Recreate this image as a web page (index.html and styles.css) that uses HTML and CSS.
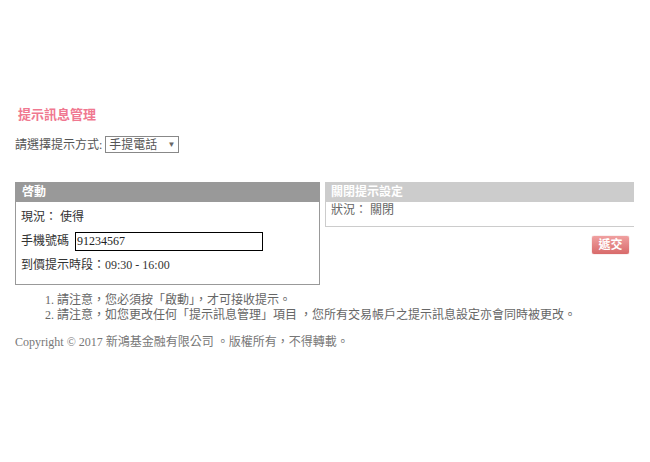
FILE: index.html
```html
<!DOCTYPE html>
<html lang="zh-Hant">
<head>
<meta charset="utf-8">
<link rel="stylesheet" href="styles.css">
</head>
<body>
<div class="page">
  <h1 class="title">提示訊息管理</h1>
  <div class="method">
    <span>請選擇提示方式:</span>
    <span class="select"><span class="select-text">手提電話</span><span class="arrow">▼</span></span>
  </div>
  <div class="panels">
    <div class="panel panel-left">
      <div class="panel-head dark">啓動</div>
      <div class="panel-body">
        <div class="row">現況： 使得</div>
        <div class="row row-input"><span>手機號碼</span><span class="input">91234567</span></div>
        <div class="row">到價提示時段：09:30 - 16:00</div>
      </div>
    </div>
    <div class="right-col">
      <div class="panel panel-right">
        <div class="panel-head light">關閉提示設定</div>
        <div class="panel-body-right">狀況： 關閉</div>
      </div>
      <div class="actions"><span class="btn">遞交</span></div>
    </div>
  </div>
  <ol class="notes">
    <li>請注意，您必須按「啟動」，才可接收提示。</li>
    <li>請注意，如您更改任何「提示訊息管理」項目 ，您所有交易帳戶之提示訊息設定亦會同時被更改。</li>
  </ol>
  <p class="copy">Copyright © 2017 新鴻基金融有限公司 。版權所有，不得轉載。</p>
</div>
</body>
</html>
```

FILE: styles.css
```css
html, body {
  margin: 0;
  padding: 0;
  background: #fff;
}
body {
  font-family: "Liberation Serif", "Noto Sans CJK TC", serif;
  font-size: 12px;
  color: #555;
}
.page {
  padding: 106px 0 0 15px;
  width: 619px;
}
.title {
  margin: 0 0 0 3px;
  font-size: 13px;
  line-height: 18px;
  font-weight: bold;
  color: #f07890;
}
.method {
  margin-top: 11px;
  display: flex;
  align-items: center;
  height: 18px;
  gap: 3px;
}
.select {
  display: inline-flex;
  align-items: center;
  justify-content: space-between;
  width: 66px;
  height: 15px;
  border: 1px solid #888;
  padding: 0 3px 0 3px;
  color: #555;
}
.arrow {
  font-size: 8px;
  color: #666;
}
.panels {
  margin-top: 29px;
  display: flex;
  gap: 5px;
  align-items: flex-start;
}
.panel-left {
  width: 303px;
  border: 1px solid #999;
  border-top: none;
}
.panel-head {
  height: 20px;
  line-height: 20px;
  padding-left: 6px;
  color: #fff;
  font-weight: bold;
  font-size: 12px;
}
.panel-head.dark { background: #999; }
.panel-head.light { background: #ccc; }
.panel-body {
  padding: 5px 0 6px 5px;
  color: #333;
}
.row {
  height: 20px;
  line-height: 20px;
  margin-bottom: 3px;
}
.row-input {
  display: flex;
  align-items: center;
  gap: 6px;
  height: 22px;
  margin-bottom: 3px;
}
.input {
  width: 185px;
  height: 17px;
  line-height: 17px;
  border: 1px solid #000;
  padding-left: 1px;
  color: #222;
}
.right-col {
  width: 309px;
  display: flex;
  flex-direction: column;
}
.panel-right {
  border-left: 1px solid #ccc;
  border-bottom: 1px solid #ccc;
}
.panel-right .panel-head { padding-left: 5px; }
.panel-body-right {
  height: 24px;
  line-height: 16px;
  padding-left: 5px;
  color: #666;
}
.actions {
  display: flex;
  justify-content: flex-end;
  padding: 9px 5px 0 0;
}
.btn {
  width: 37px;
  height: 18px;
  line-height: 18px;
  text-align: center;
  color: #fff;
  font-weight: bold;
  background: linear-gradient(#f0a0a0, #d86a6a);
  border-radius: 2px;
  box-shadow: 0 0 1px #c66;
}
.notes {
  margin: 8px 0 0 0;
  padding-left: 42px;
  line-height: 15px;
  color: #666;
}
.copy {
  margin: 12px 0 0 0;
  color: #777;
  line-height: 15px;
}
```
